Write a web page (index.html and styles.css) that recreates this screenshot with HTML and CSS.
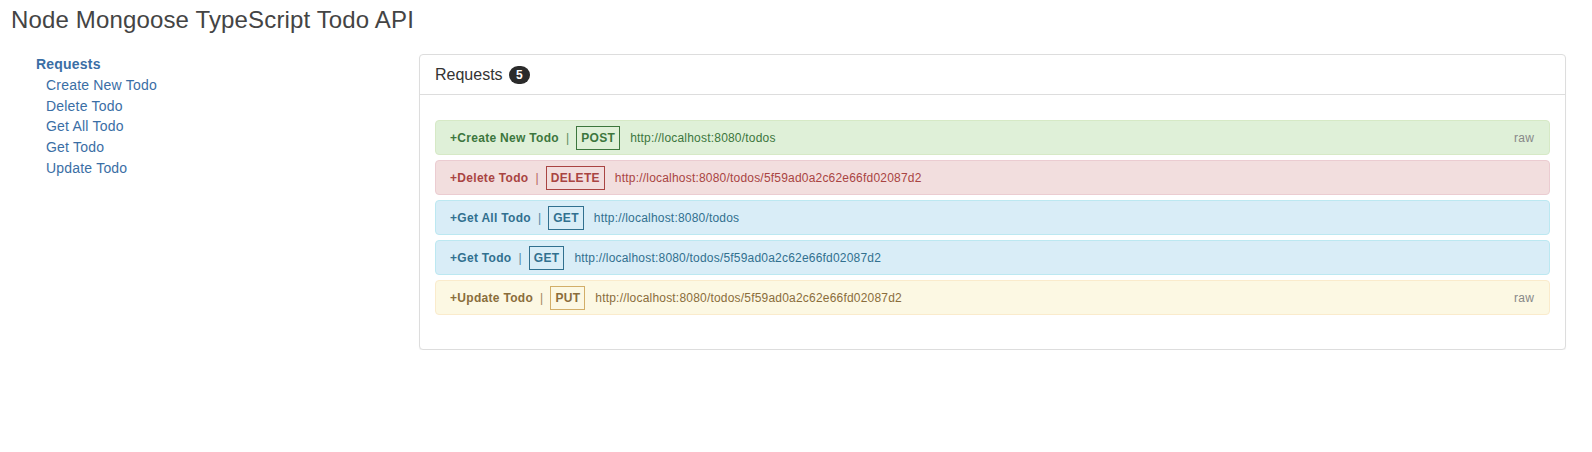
FILE: index.html
```html
<!DOCTYPE html>
<html>
<head>
<meta charset="utf-8">
<title>Node Mongoose TypeScript Todo API</title>
<link rel="stylesheet" href="styles.css">
</head>
<body>
<div class="page">
  <h1 class="title">Node Mongoose TypeScript Todo API</h1>
  <div class="layout">
    <nav class="sidebar">
      <a class="nav-head" href="#">Requests</a>
      <a class="nav-item" href="#">Create New Todo</a>
      <a class="nav-item" href="#">Delete Todo</a>
      <a class="nav-item" href="#">Get All Todo</a>
      <a class="nav-item" href="#">Get Todo</a>
      <a class="nav-item" href="#">Update Todo</a>
    </nav>
    <section class="panel">
      <div class="panel-heading">Requests <span class="badge">5</span></div>
      <div class="panel-body">
        <div class="req req-success">
          <span class="req-name">+Create New Todo</span>
          <span class="pipe">|</span>
          <span class="method">POST</span>
          <span class="url">http://localhost:8080/todos</span>
          <span class="raw">raw</span>
        </div>
        <div class="req req-danger">
          <span class="req-name">+Delete Todo</span>
          <span class="pipe">|</span>
          <span class="method">DELETE</span>
          <span class="url">http://localhost:8080/todos/5f59ad0a2c62e66fd02087d2</span>
        </div>
        <div class="req req-info">
          <span class="req-name">+Get All Todo</span>
          <span class="pipe">|</span>
          <span class="method">GET</span>
          <span class="url">http://localhost:8080/todos</span>
        </div>
        <div class="req req-info">
          <span class="req-name">+Get Todo</span>
          <span class="pipe">|</span>
          <span class="method">GET</span>
          <span class="url">http://localhost:8080/todos/5f59ad0a2c62e66fd02087d2</span>
        </div>
        <div class="req req-warning">
          <span class="req-name">+Update Todo</span>
          <span class="pipe">|</span>
          <span class="method">PUT</span>
          <span class="url">http://localhost:8080/todos/5f59ad0a2c62e66fd02087d2</span>
          <span class="raw">raw</span>
        </div>
      </div>
    </section>
  </div>
</div>
</body>
</html>
```

FILE: styles.css
```css
* { box-sizing: border-box; }

body {
  margin: 0;
  font-family: "Liberation Sans", Arial, Helvetica, sans-serif;
  color: #333;
  background: #fff;
}

.page {
  padding: 6px 26px 0 11px;
}

.title {
  margin: 0;
  font-size: 24px;
  line-height: 27px;
  font-weight: normal;
  letter-spacing: 0.15px;
  color: #444;
}

.layout {
  display: flex;
  align-items: flex-start;
  margin-top: 21px;
}

.sidebar {
  width: 408px;
  flex: none;
  padding-left: 25px;
  display: flex;
  flex-direction: column;
}

.sidebar a {
  text-decoration: none;
  font-size: 14px;
  line-height: 20.8px;
  letter-spacing: 0.2px;
  color: #3a6ea5;
}

.nav-head {
  font-weight: bold;
  color: #35689c;
}

.nav-item {
  padding-left: 10px;
}

.panel {
  flex: 1;
  border: 1px solid #ddd;
  border-radius: 4px;
  background: #fff;
  box-shadow: 0 1px 1px rgba(0, 0, 0, 0.05);
}

.panel-heading {
  height: 40px;
  line-height: 39px;
  padding: 0 15px;
  border-bottom: 1px solid #ddd;
  font-size: 16px;
  color: #333;
}

.badge {
  display: inline-block;
  min-width: 10px;
  padding: 3px 7px;
  margin-left: 2px;
  font-size: 12px;
  font-weight: bold;
  line-height: 1;
  color: #fff;
  text-align: center;
  vertical-align: 1px;
  background: #2b2b2b;
  border-radius: 10px;
}

.panel-body {
  padding: 25px 15px 29px;
}

.req {
  display: flex;
  align-items: center;
  height: 35px;
  margin-bottom: 5px;
  padding: 0 15px 0 14px;
  border: 1px solid;
  border-radius: 4px;
  font-size: 12px;
  letter-spacing: 0.2px;
}

.req-name {
  font-weight: bold;
  letter-spacing: 0.3px;
}

.pipe {
  margin: 0 7px 0 7px;
  opacity: 0.8;
}

.method {
  height: 24px;
  line-height: 22px;
  padding: 0 4px;
  border: 1px solid;
  font-weight: bold;
  letter-spacing: 0.3px;
}

.url {
  margin-left: 10px;
}

.raw {
  margin-left: auto;
  color: #888;
}

.req-success {
  background: #dff0d8;
  border-color: #d6e9c6;
  color: #3c763d;
}
.req-success .method { border-color: #3c763d; }

.req-danger {
  background: #f2dede;
  border-color: #ebccd1;
  color: #a94442;
}
.req-danger .method { border-color: #a94442; }

.req-info {
  background: #d9edf7;
  border-color: #bce8f1;
  color: #31708f;
}
.req-info .method { border-color: #31708f; }

.req-warning {
  background: #fcf8e3;
  border-color: #faebcc;
  color: #8a6d3b;
}
.req-warning .method { border-color: #d2ae68; }
```
